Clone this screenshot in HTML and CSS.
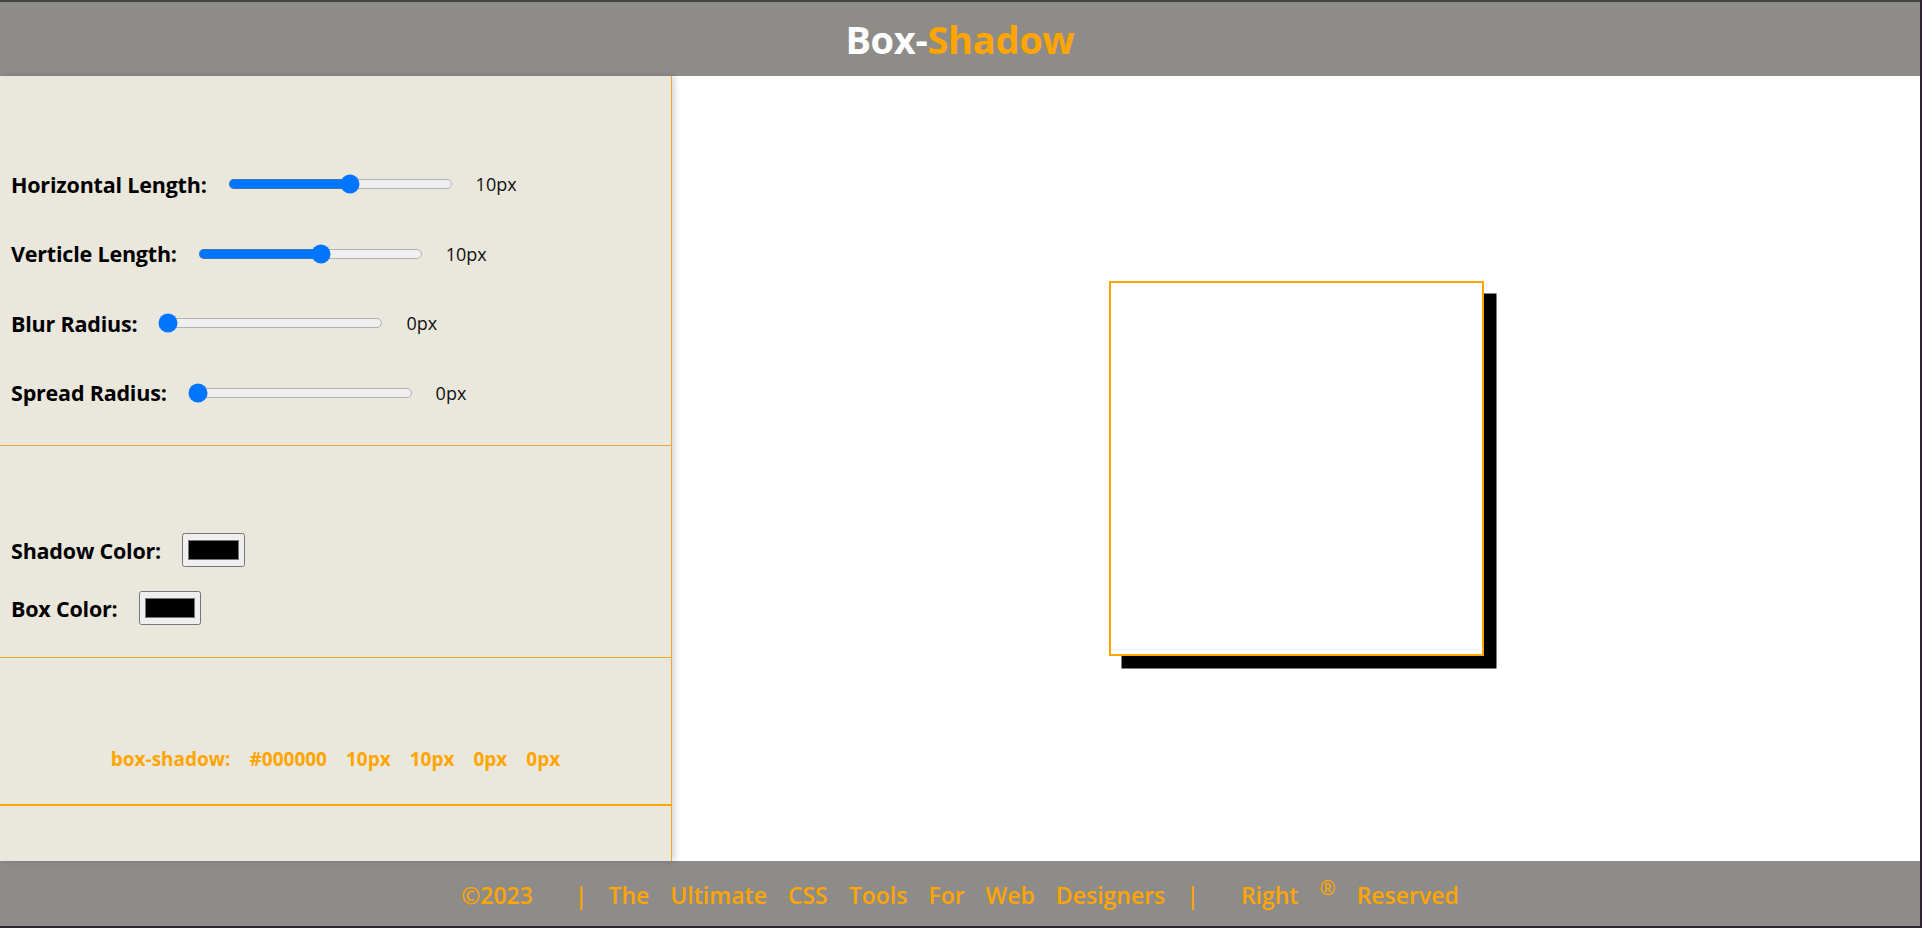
FILE: index.html
```html
<!DOCTYPE html>
<html lang="en">
<head>
<meta charset="utf-8">
<title>Box-Shadow Generator</title>
<link rel="stylesheet" href="styles.css">
</head>
<body>
<div class="app">
  <header class="header">
    <h1 class="title"><span class="title-white">Box-</span><span class="title-orange">Shadow</span></h1>
  </header>
  <main class="main">
    <aside class="panel">
      <section class="sliders">
        <div class="row">
          <label class="label" for="h">Horizontal Length:</label>
          <input class="range" id="h" type="range" min="-100" max="100" value="10">
          <span class="value">10px</span>
        </div>
        <div class="row">
          <label class="label" for="v">Verticle Length:</label>
          <input class="range" id="v" type="range" min="-100" max="100" value="10">
          <span class="value">10px</span>
        </div>
        <div class="row">
          <label class="label" for="b">Blur Radius:</label>
          <input class="range" id="b" type="range" min="0" max="100" value="0">
          <span class="value">0px</span>
        </div>
        <div class="row">
          <label class="label" for="s">Spread Radius:</label>
          <input class="range" id="s" type="range" min="0" max="100" value="0">
          <span class="value">0px</span>
        </div>
      </section>
      <section class="colors">
        <div class="row">
          <label class="label" for="sc">Shadow Color:</label>
          <input class="color" id="sc" type="color" value="#000000">
        </div>
        <div class="row">
          <label class="label" for="bc">Box Color:</label>
          <input class="color" id="bc" type="color" value="#000000">
        </div>
      </section>
      <section class="code">
        <p class="code-line"><span>box-shadow:</span><span>#000000</span><span>10px</span><span>10px</span><span>0px</span><span>0px</span></p>
      </section>
      <div class="panel-rest"></div>
    </aside>
    <section class="preview">
      <div class="box"></div>
    </section>
  </main>
  <footer class="footer">
    <p class="footer-text">&copy;2023&nbsp; | The Ultimate CSS Tools For Web Designers |&nbsp; Right <sup class="reg">&reg;</sup> Reserved</p>
  </footer>
</div>
</body>
</html>
```

FILE: styles.css
```css
* {
  box-sizing: border-box;
}

html, body {
  margin: 0;
  padding: 0;
  background: #2c2430;
}

body {
  font-family: "Open Sans", "Noto Sans", "DejaVu Sans", sans-serif;
  overflow: hidden;
}

.app {
  width: 1920px;
  height: 926px;
  display: flex;
  flex-direction: column;
  background: #ffffff;
}

.header {
  height: 76px;
  flex: 0 0 76px;
  background: #8e8c88;
  border-top: 2px solid #454545;
  display: flex;
  align-items: center;
  justify-content: center;
}

.title {
  margin: 0;
  font-size: 38px;
  font-weight: 700;
  line-height: 1;
  letter-spacing: -0.3px;
}

.title-white {
  color: #ffffff;
}

.title-orange {
  color: #ffa500;
}

.main {
  flex: 1 1 auto;
  display: flex;
  min-height: 0;
}

.panel {
  width: 672px;
  flex: 0 0 672px;
  background: #eae7dd;
  border-right: 1px solid #f0a92a;
  box-shadow: 3px 0 6px rgba(0, 0, 0, 0.16);
  position: relative;
  z-index: 1;
  display: flex;
  flex-direction: column;
}

.sliders {
  padding: 88px 0 32.5px 11px;
  display: flex;
  flex-direction: column;
  gap: 29.5px;
  border-bottom: 1px solid #eca63a;
}

.colors {
  padding: 84px 0 29px 11px;
  display: flex;
  flex-direction: column;
  gap: 18px;
  border-bottom: 1px solid #f2a628;
}

.row {
  height: 40px;
  display: flex;
  align-items: center;
}

.label {
  font-size: 21.5px;
  font-weight: 700;
  color: #000000;
  letter-spacing: -0.2px;
  margin-right: 21px;
}

.range {
  zoom: 1.25;
  width: 180px;
  margin: 0;
}

.value {
  font-size: 18px;
  color: #111111;
  margin-left: 23px;
}

.color {
  zoom: 1.25;
  margin: 0;
}

.code {
  padding: 86px 0 30px;
  border-bottom: 2px solid #ffa500;
}

.code-line {
  margin: 0;
  height: 30px;
  line-height: 30px;
  display: flex;
  justify-content: center;
  gap: 19px;
  font-size: 19px;
  font-weight: 700;
  color: #ffa500;
}

.panel-rest {
  flex: 1 1 auto;
}

.preview {
  flex: 1 1 auto;
  display: flex;
  align-items: center;
  justify-content: center;
  background: #ffffff;
}

.box {
  width: 375px;
  height: 375px;
  background: #ffffff;
  border: 2.5px solid #ffa500;
  box-shadow: 12.5px 12.5px 0 0 #000000;
}

.footer {
  height: 65px;
  flex: 0 0 65px;
  background: #8e8c88;
  display: flex;
  align-items: center;
  justify-content: center;
}

.footer-text {
  margin: 4px 0 0;
  font-size: 23px;
  font-weight: 600;
  color: #ffa500;
  word-spacing: 15px;
  line-height: 1;
  white-space: nowrap;
}

.reg {
  font-size: 0.85em;
  vertical-align: 0.45em;
  line-height: 0;
}
```
